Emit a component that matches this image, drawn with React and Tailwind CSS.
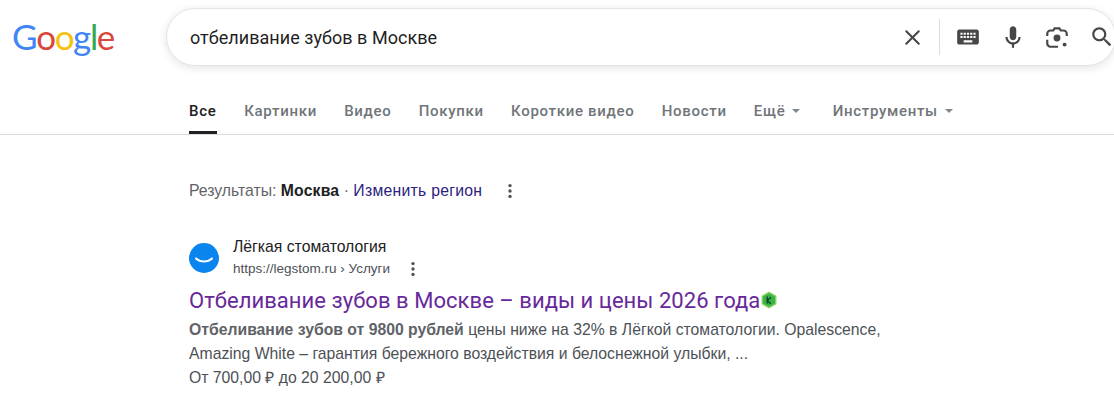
import React from 'react';
import { X } from 'lucide-react';

const tabs = ['Картинки', 'Видео', 'Покупки', 'Короткие видео', 'Новости'];

const Caret = () => (
    <span className="ml-[7px] inline-block h-0 w-0 border-x-[4px] border-t-[4px] border-x-transparent border-t-[#80868b]" />
);

const Dots = ({ className = '' }) => (
    <svg viewBox="0 0 24 24" className={`h-[20px] w-[20px] fill-[#4d5156] ${className}`}>
        <circle cx="12" cy="5.5" r="2" />
        <circle cx="12" cy="12" r="2" />
        <circle cx="12" cy="18.5" r="2" />
    </svg>
);

const App = () => {
    return (
        <div className="h-[419px] w-[1114px] overflow-hidden bg-white font-['Liberation_Sans',sans-serif]">
            {/* Header */}
            <div className="flex h-[66px] items-end">
                <div className="flex h-[58px] w-[166px] shrink-0 items-center pb-[2px] pl-[12px] font-['Lato',sans-serif] text-[35px] leading-none tracking-[-1.4px]">
                    <span className="text-[#4285f4]">G</span>
                    <span className="text-[#d9483b]">o</span>
                    <span className="text-[#f4c20d]">o</span>
                    <span className="text-[#4285f4]">g</span>
                    <span className="text-[#34a853]">l</span>
                    <span className="text-[#d9483b]">e</span>
                </div>
                <div className="flex h-[58px] w-[950px] shrink-0 items-center rounded-[29px] border border-[#e4e4e4] bg-white shadow-[0_2px_8px_rgba(32,33,36,0.12)]">
                    <div className="flex-1 pl-[23px] font-['Roboto',sans-serif] text-[18px] tracking-[0.03px] text-[#1f1f1f]">
                        отбеливание зубов в Москве
                    </div>
                    <X className="h-[25px] w-[25px] text-[#474747]" strokeWidth={2} />
                    <div className="ml-[14px] h-[36px] w-px bg-[#dadce0]" />
                    <svg viewBox="0 0 24 24" className="ml-[15px] h-[26px] w-[26px] fill-[#474747]">
                        <path d="M20 5H4c-1.1 0-1.99.9-1.99 2L2 17c0 1.1.9 2 2 2h16c1.1 0 2-.9 2-2V7c0-1.1-.9-2-2-2zm-9 3h2v2h-2V8zm0 3h2v2h-2v-2zM8 8h2v2H8V8zm0 3h2v2H8v-2zm-1 2H5v-2h2v2zm0-3H5V8h2v2zm9 7H8v-2h8v2zm0-4h-2v-2h2v2zm0-3h-2V8h2v2zm3 3h-2v-2h2v2zm0-3h-2V8h2v2z" />
                    </svg>
                    <svg viewBox="0 0 24 24" className="ml-[19px] h-[26px] w-[26px] fill-[#474747]">
                        <path d="M12 15c1.66 0 3-1.31 3-2.97V5.01C15 3.35 13.66 2 12 2S9 3.35 9 5.01v7.02C9 13.69 10.34 15 12 15z" />
                        <path d="M11 18.08h2V22h-2z" />
                        <path d="M12 16.93c-1.39 0-2.63-.58-3.54-1.55l-1.41 1.49C8.31 18.21 10.07 19 12 19c3.87 0 7-2.92 7-7h-2c0 2.92-2.24 4.93-5 4.93zM7.05 16.87C5.78 15.54 5 14.04 5 12h2c0 1.45.56 2.42 1.46 3.38z" />
                    </svg>
                    <svg viewBox="0 0 24 24" className="ml-[18px] h-[26px] w-[26px]">
                        <path d="M3 11V9a3 3 0 0 1 3-3h2.500l1.300-2h4.400l1.300 2H18a3 3 0 0 1 3 3v2" fill="none" stroke="#474747" strokeWidth="2" />
                        <path d="M3 14.500V18a3 3 0 0 0 3 3h7" fill="none" stroke="#474747" strokeWidth="2" />
                        <circle cx="12" cy="13" r="3.200" fill="#474747" />
                        <circle cx="19" cy="19" r="1.800" fill="#474747" />
                    </svg>
                    <svg viewBox="0 0 24 24" className="ml-[19px] h-[26px] w-[26px] shrink-0 fill-[#474747]">
                        <path d="M15.5 14h-.79l-.28-.27C15.41 12.59 16 11.11 16 9.5 16 5.91 13.09 3 9.5 3S3 5.91 3 9.5 5.91 16 9.5 16c1.61 0 3.09-.59 4.23-1.57l.27.28v.79l5 4.99L20.49 19l-4.99-5zm-6 0C7.01 14 5 11.99 5 9.5S7.01 5 9.5 5 14 7.01 14 9.5 11.99 14 9.5 14z" />
                    </svg>
                </div>
            </div>

            {/* Tabs */}
            <div className="mt-[22px] flex h-[47px] items-stretch gap-[27.2px] border-b border-[#dadce0] pl-[189px] font-['Roboto',sans-serif] text-[15px] font-medium tracking-[0.7px] text-[#70757a]">
                <div className="w-[28px] border-b-[3px] border-[#202124] pt-[12px] text-[#202124]">Все</div>
                {tabs.map((tab) => (
                    <div key={tab} className="pt-[12px]">{tab}</div>
                ))}
                <div className="flex items-start pt-[12px]">
                    Ещё
                    <span className="flex h-[22px] items-center"><Caret /></span>
                </div>
                <div className="ml-[5px] flex items-start pt-[12px]">
                    Инструменты
                    <span className="flex h-[22px] items-center"><Caret /></span>
                </div>
            </div>

            {/* Location */}
            <div className="mt-[44px] flex h-[24px] items-center pl-[189px] text-[15.75px] text-[#5f6368]">
                <span>Результаты:&nbsp;</span>
                <span className="font-bold tracking-[0.2px] text-[#202124]">Москва</span>
                <span>&nbsp;·&nbsp;</span>
                <span className="tracking-[0.27px] text-[#2a2180]">Изменить регион</span>
                <Dots className="ml-[18px]" />
            </div>

            {/* Result */}
            <div className="mt-[33px] pl-[189px]">
                <div className="flex items-center">
                    <div className="flex h-[30px] w-[30px] items-center justify-center rounded-full bg-[#0a84ee]">
                        <svg viewBox="0 0 30 30" className="h-[30px] w-[30px]">
                            <path d="M7 15.5c4.500 4 11.500 4 16 0" fill="none" stroke="#fff" strokeWidth="2" strokeLinecap="round" />
                        </svg>
                    </div>
                    <div className="ml-[14px]">
                        <div className="text-[15.75px] leading-[22px] text-[#202124]">Лёгкая стоматология</div>
                        <div className="flex items-center text-[13.5px] leading-[22px] text-[#4d5156]">
                            https://legstom.ru › Услуги
                            <Dots className="ml-[13px]" />
                        </div>
                    </div>
                </div>
                <div className="mt-[6px] flex items-center font-['Roboto',sans-serif] text-[22px] leading-[30px] tracking-[0.04px] text-[#67289a]">
                    Отбеливание зубов в Москве – виды и цены 2026 года
                    <svg viewBox="0 0 20 20" className="-mt-[3px] h-[18px] w-[18px]">
                        <path d="M10 1.5l7.5 4.2v8.6L10 18.5l-7.5-4.2V5.700z" fill="#37b54a" stroke="#8bd25c" strokeWidth="1.500" />
                        <path d="M8 6v8M12 7l-4 4 4 3" fill="none" stroke="#10451f" strokeWidth="1.500" />
                    </svg>
                </div>
                <div className="mt-[2px] text-[15.75px] leading-[24px] text-[#4d5156]">
                    <div><b className="text-[#5f6368]">Отбеливание зубов от 9800 рублей</b> цены ниже на 32% в Лёгкой стоматологии. Opalescence,</div>
                    <div>Amazing White – гарантия бережного воздействия и белоснежной улыбки, ...</div>
                    <div>От 700,00 ₽ до 20 200,00 ₽</div>
                </div>
            </div>
        </div>
    );
};

export default App;
